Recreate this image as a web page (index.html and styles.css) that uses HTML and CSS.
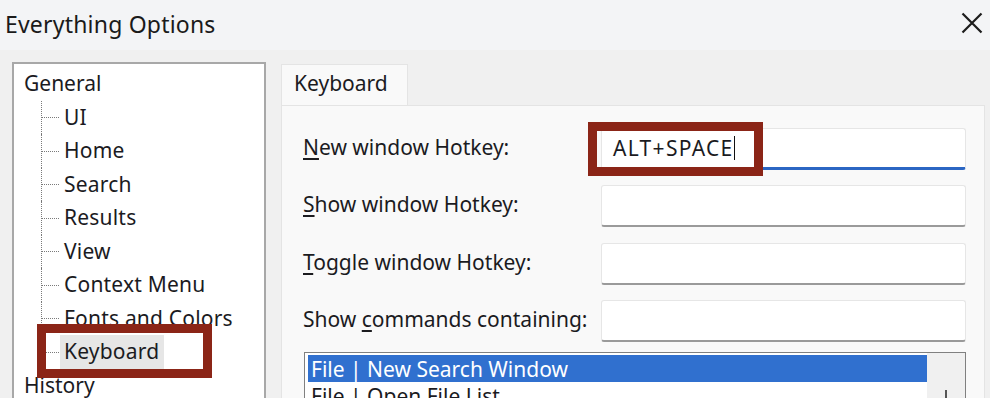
FILE: index.html
```html
<!DOCTYPE html>
<html>
<head>
<meta charset="utf-8">
<link rel="stylesheet" href="styles.css">
</head>
<body>
<div class="window">
  <div class="titlebar">
    <span class="title">Everything Options</span>
    <svg class="close" width="22" height="22" viewBox="0 0 22 22"><path d="M1.5 1.5 L20.5 20.5 M20.5 1.5 L1.5 20.5" stroke="#1c1c1c" stroke-width="2.2" fill="none"/></svg>
  </div>
  <div class="content">
    <div class="tree">
      <div class="node">General</div>
      <div class="children">
        <div class="child"><span class="lbl">UI</span></div>
        <div class="child"><span class="lbl">Home</span></div>
        <div class="child"><span class="lbl">Search</span></div>
        <div class="child"><span class="lbl">Results</span></div>
        <div class="child"><span class="lbl">View</span></div>
        <div class="child"><span class="lbl">Context Menu</span></div>
        <div class="child"><span class="lbl">Fonts and Colors</span></div>
        <div class="child"><span class="lbl selected">Keyboard</span></div>
      </div>
      <div class="node">History</div>
    </div>
    <div class="right">
      <div class="tabs"><div class="tab">Keyboard</div></div>
      <div class="panel">
        <div class="form">
          <div class="label"><u>N</u>ew window Hotkey:</div>
          <div class="input focused"><span class="value">ALT+SPACE</span><span class="caret"></span></div>
          <div class="label"><u>S</u>how window Hotkey:</div>
          <div class="input"></div>
          <div class="label"><u>T</u>oggle window Hotkey:</div>
          <div class="input"></div>
          <div class="label">Show <u>c</u>ommands containing:</div>
          <div class="input"></div>
        </div>
        <div class="listbox">
          <div class="items">
            <div class="item sel">File | New Search Window</div>
            <div class="item">File | Open File List</div>
          </div>
          <div class="scrollbar"><span class="thumbline"></span></div>
        </div>
      </div>
    </div>
  </div>
  <div class="mark mark-tree"></div>
  <div class="mark mark-input"></div>
</div>
</body>
</html>
```

FILE: styles.css
```css
html, body {
  margin: 0;
  padding: 0;
}
body {
  width: 990px;
  height: 398px;
  overflow: hidden;
  background: #f0f0f0;
  font-family: "Noto Sans", "Open Sans", sans-serif;
  color: #1b1b1f;
}
.window {
  position: relative;
  width: 990px;
  height: 398px;
  overflow: hidden;
}
.titlebar {
  height: 50px;
  background: #f3f4f6;
  display: flex;
  align-items: center;
  justify-content: space-between;
  padding: 0 7px 0 5px;
  box-sizing: border-box;
}
.title {
  font-size: 23px;
  color: #1a1a1a;
  margin-top: -3px;
  letter-spacing: 0.2px;
}
.close {
  margin-top: -5px;
}
.content {
  display: flex;
  padding: 12px 0 0 12px;
  align-items: flex-start;
}
.tree {
  width: 254px;
  height: 420px;
  flex: none;
  box-sizing: border-box;
  border: 2px solid #a8a8a8;
  background: #ffffff;
  padding: 3px 0 0 10px;
  font-size: 21px;
  line-height: 33.5px;
}
.node {
  height: 33.5px;
  white-space: nowrap;
}
.children {
  margin-left: 17px;
}
.child {
  position: relative;
  height: 33.5px;
  padding-left: 23px;
  white-space: nowrap;
}
.child::before {
  content: "";
  position: absolute;
  left: 0;
  top: 0;
  bottom: 0;
  border-left: 1px dotted #7a7a7a;
}
.child:last-child::before {
  bottom: 50%;
}
.child::after {
  content: "";
  position: absolute;
  left: 1px;
  top: 50%;
  width: 17px;
  border-top: 1px dotted #7a7a7a;
}
.lbl {
  display: inline-block;
  height: 33.5px;
  letter-spacing: 0.2px;
}
.lbl.selected {
  background: #e6e6e6;
  padding: 0 5px 0 4px;
  margin-left: -4px;
}
.right {
  flex: 1;
  margin: 2px 5px 0 15px;
  display: flex;
  flex-direction: column;
}
.tabs {
  display: flex;
}
.tab {
  width: 127px;
  height: 41px;
  box-sizing: border-box;
  background: #f9f9f9;
  border: 1px solid #e4e4e4;
  border-bottom: none;
  font-size: 21px;
  line-height: 37px;
  padding-left: 12px;
}
.panel {
  background: #f9f9f9;
  border: 1px solid #e4e4e4;
  height: 320px;
  box-sizing: border-box;
  padding: 22px 0 0 21px;
}
.form {
  display: grid;
  grid-template-columns: 298px 365px;
  grid-auto-rows: 42px;
  row-gap: 15.3px;
  align-items: center;
}
.label {
  font-size: 21px;
  white-space: nowrap;
  margin-top: -4px;
}
.label u {
  text-decoration-thickness: 1.5px;
  text-underline-offset: 3px;
}
.input {
  height: 42px;
  box-sizing: border-box;
  background: #ffffff;
  border: 1px solid #e6e6e6;
  border-bottom: 2px solid #9a9a9a;
  border-radius: 3px;
  display: flex;
  align-items: center;
  padding-left: 11px;
  font-size: 21px;
}
.input.focused {
  border-bottom: 3px solid #2b66c3;
}
.value {
  letter-spacing: 1.3px;
}
.caret {
  display: inline-block;
  width: 0;
  height: 24px;
  border-left: 1.5px solid #111;
  margin-left: 0;
}
.listbox {
  margin: 10px 0 0 1px;
  width: 662px;
  height: 100px;
  box-sizing: border-box;
  border: 1px solid #808080;
  background: #ffffff;
  display: flex;
}
.items {
  flex: 1;
  padding: 2px 0 0 3px;
  font-size: 21px;
  line-height: 28px;
}
.item {
  height: 27px;
  padding-left: 3px;
  white-space: nowrap;
}
.item.sel {
  background: #3070cf;
  color: #ffffff;
}
.scrollbar {
  width: 38px;
  flex: none;
  background: #f0f0f0;
}
.thumbline {
  display: block;
  width: 2px;
  height: 12px;
  background: #555;
  margin: 37px 0 0 18px;
}
.mark {
  position: absolute;
  border: 9px solid #8b2517;
  box-sizing: border-box;
}
.mark-tree {
  left: 37px;
  top: 324px;
  width: 175px;
  height: 54px;
}
.mark-input {
  left: 588px;
  top: 122px;
  width: 175px;
  height: 54px;
}
```
